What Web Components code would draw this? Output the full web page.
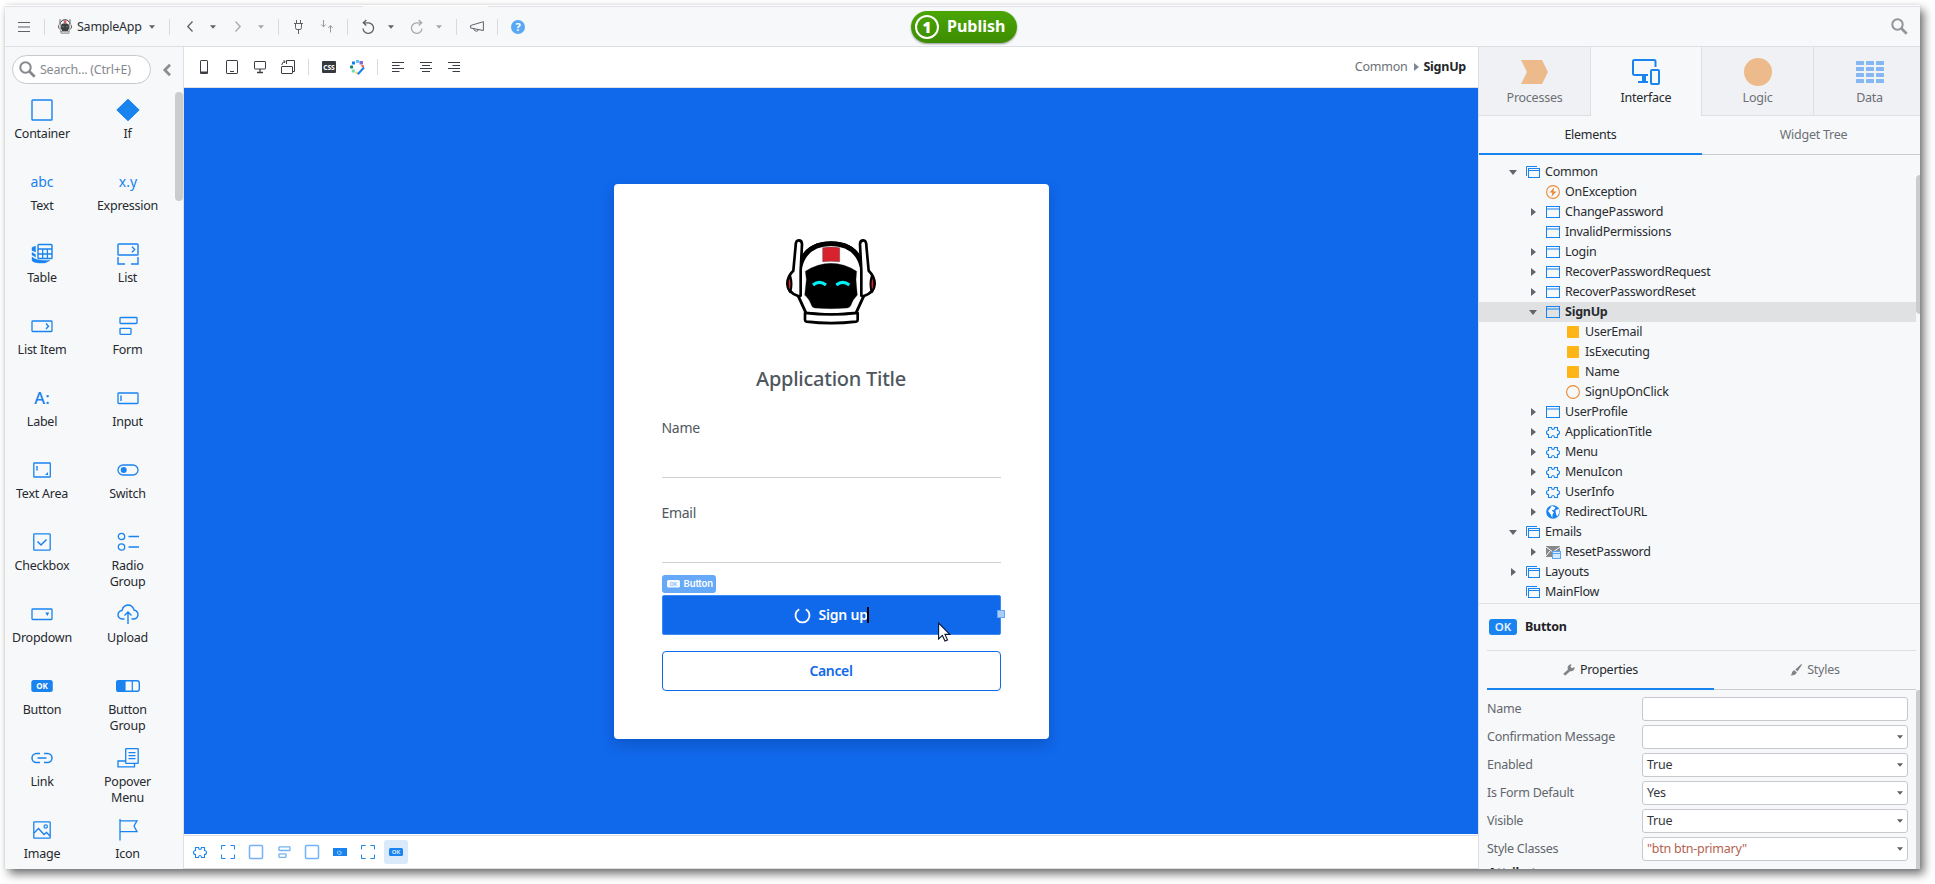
<!DOCTYPE html>
<html lang="en">
<head>
<meta charset="utf-8">
<title>SampleApp</title>
<style>
html,body{margin:0;height:100%;background:#fff;overflow:hidden}
body{font:12.5px/16px "Noto Sans",sans-serif;letter-spacing:-.25px;color:#272b30}
</style>
</head>
<body>
<studio-window></studio-window>
<script>
const W=(w,h,c)=>({w,h,c});
const ROBOT=`<g stroke-linejoin="round" stroke-linecap="round" stroke="#000">
<path d="M38 95Q48 12 135 12Q222 12 232 95L236 165 210 222Q135 232 60 222L34 165Z" fill="#fff" stroke-width="9"/>
<path d="M42 82Q60 14 135 14Q210 14 228 82" fill="none" stroke-width="14"/>
<path d="M57 222V243Q57 247 62 248Q135 257 210 248Q215 247 215 243V222Q135 231 57 222Z" fill="#fff" stroke-width="8"/>
<path d="M29 20Q29 4 38 4Q48 4 48 16L44 95 44 170 38 172Q4 160 4 134Q4 112 22 95Z" fill="#fff" stroke-width="8"/>
<path d="M241 20Q241 4 232 4Q222 4 222 16L226 95 226 170 232 172Q266 160 266 134Q266 112 248 95Z" fill="#fff" stroke-width="8"/>
<path d="M5 134Q5 118 13 112Q20 134 13 160Q5 150 5 134ZM265 134Q265 118 257 112Q250 134 257 160Q265 150 265 134Z" fill="#d8232f" stroke-width="6"/></g>
<path d="M58 97Q95 73 135 73T212 97L210 122 214 168Q200 182 194 200 191 206 184 207Q135 211 86 207 79 206 77 200 70 180 56 168L61 122Z" fill="#000"/>
<path d="M110 26Q135 22 161 26V68Q135 66 110 68Z" fill="#d8232f"/>
<path d="M81 138Q100 122 120 138M151 138Q170 122 190 138" fill="none" stroke="#00f0f8" stroke-width="9" stroke-linecap="butt"/>`;
const T=(x,y,s,t,w=400,f='currentColor')=>`<text x="${x}" y="${y}" font-size="${s}" font-weight="${w}" text-anchor="middle" fill="${f}" stroke="none" letter-spacing="0">${t}</text>`;
const ICONS={
robot:W(90,86,`<svg viewBox="0 0 270 258" width="90" height="86">${ROBOT}</svg>`),
robotSmall:W(14,15,`<svg viewBox="0 0 270 258" width="14" height="15" preserveAspectRatio="none" opacity=".75">${ROBOT}</svg>`),
burger:W(12,10,`<path d="M0 .5H12M0 5H12M0 9.500H12"/>`),
caret:W(6,4,`<path d="M0 .2H6L3 3.800Z" fill="currentColor" stroke="none"/>`),
back:W(6,11,`<path d="M5.500 .5.8 5.500 5.500 10.500" stroke-width="1.300"/>`),
fwd:W(6,11,`<path d="M.5 .5 5.200 5.500.5 10.500" stroke-width="1.300"/>`),
plug:W(9,14,`<path d="M2.500 0V3.500M6.500 0V3.500M0 3.500H9M1.500 3.500V7.500Q1.500 9.500 3 9.500H6Q7.500 9.500 7.500 7.500V3.500M4.500 9.500V14"/>`),
swap:W(12,13,`<path d="M2.500 0V7M.3 4.500 2.500 6.800 4.700 4.500M9.500 12.500V5.500M7.300 8 9.500 5.700 11.700 8"/>`),
undo:W(13,14,`<path d="M1.500 2.800H6.500A5.300 5.300 0 1 1 1 8.500M4.300 0 1.300 2.800 4.300 5.600" stroke-width="1.300"/>`),
redo:W(13,14,`<path d="M11.500 2.800H6.500A5.300 5.300 0 1 0 12 8.500M8.700 0 11.700 2.800 8.700 5.600" stroke-width="1.300"/>`),
mega:W(14,11,`<path d="M.6 4.500 13.400 .7V9.500L.6 7ZM3.500 7.800Q4.500 10.300 6.500 10.200T8 8.600"/>`),
help:W(14,14,`<circle cx="7" cy="7" r="7" fill="#5aa7f3" stroke="none"/>${T(7,11,11,'?',700,'#fff')}`),
mag:W(17,17,`<circle cx="6.500" cy="6.500" r="5.200" stroke-width="2"/><path d="M10.500 10.500 15.700 15.700" stroke-width="2.700"/>`),
collapse:W(8,12,`<path d="M7 .8 1.800 6 7 11.200" stroke-width="2.700"/>`),
phone:W(8,14,`<rect x=".5" y=".5" width="7" height="13" rx=".6"/><path d="M0 12.500H8" stroke-width="2"/>`),
tablet:W(12,14,`<rect x=".5" y=".5" width="11" height="13" rx=".6"/><path d="M4 11.500H8"/>`),
monitor:W(12,12,`<rect x=".5" y=".5" width="11" height="7.500" rx=".4"/><path d="M6 8V11M3 11.500H9" stroke-width="1.300"/>`),
rotate:W(14,14,`<rect x=".5" y="6.500" width="11" height="7" rx=".5"/><path d="M5.500 4V.5H13.500V11.500H12M.8 5Q1 2 4 1.500M2.500 .3 4.200 1.500 3 3"/>`),
css:W(14,12,`<rect width="14" height="12" rx="1" fill="#34383f" stroke="none"/>${T(7,8.500,6.500,'CSS',800,'#fff')}`),
palette:W(15,15,`<g stroke="none"><rect x="6" y="0" width="3" height="3" fill="#5ac8f5"/><rect x="2" y="1.500" width="3" height="3" fill="#1483ee"/><rect x="9.500" y="1" width="3.500" height="3.500" fill="#8a67d8"/><circle cx="1.600" cy="7" r="1.700" fill="#118a77"/><circle cx="3.300" cy="11" r="1.700" fill="#6fe0ad"/><circle cx="6.500" cy="12.800" r="1.200" fill="#f5d64a"/><path d="M10.500 5.500 14 5 13.500 8.500Z" fill="#f0604c"/></g><path d="M14 7.500 7.800 14.200" stroke="#1483ee" stroke-width="2"/>`),
al:W(12,10,`<path d="M0 .5H12M0 3.500H7.500M0 6.500H12M0 9.500H7.500"/>`),
ac:W(12,10,`<path d="M0 .5H12M2 3.500H10M0 6.500H12M2 9.500H10"/>`),
ar:W(12,10,`<path d="M0 .5H12M4.500 3.500H12M0 6.500H12M4.500 9.500H12"/>`),
container:W(22,22,`<rect x="1" y="1" width="20" height="20" rx=".8" stroke-width="1.400"/>`),
if:W(24,22,`<path d="M12 .3 23.200 11 12 21.700.8 11Z" fill="currentColor"/>`),
abc:W(26,22,T(13,16,14,'abc')),
xy:W(26,22,T(13,16,14,'x.y')),
table:W(22,22,`<rect x="7" y="1.500" width="14" height="14" rx=".8" stroke-width="1.400"/><path d="M7 6H21M7 11H21M11.700 6V15.500M16.400 6V15.500" stroke-width="1.300"/><path d="M4.500 3 1 4.500V7.500L4.500 9ZM1 9.500 4.500 11.500V14L1 12ZM1 14Q5 18 19 17.500L14 20H8Q2 19.500 1 17.500Z" fill="currentColor" stroke-width=".4"/>`),
list:W(22,22,`<rect x="1" y="1" width="20" height="11" rx=".8" stroke-width="1.400"/><path d="M15 3.800 17.700 6.500 15 9.200M1 14V21H8M14 21H21V14" stroke-width="1.400"/>`),
listitem:W(22,12,`<rect x="1" y="1" width="20" height="10.500" rx=".8" stroke-width="1.300"/><path d="M15 3.500 17.500 6.200 15 9" stroke-width="1.400"/>`),
form:W(20,20,`<rect x="2" y="1.500" width="17" height="6" rx=".8" stroke-width="1.300"/><rect x="2" y="12.300" width="11" height="6" rx=".8" stroke-width="1.300"/>`),
label:W(20,22,T(10,16.500,16.500,'A:',500)),
input:W(22,12,`<rect x="1" y="1" width="20" height="10.500" rx=".8" stroke-width="1.300"/><path d="M4 3.500V9" stroke-width="1.400"/>`),
textarea:W(18,16,`<rect x=".8" y="1" width="16.500" height="14" rx=".5" stroke-width="1.300"/><path d="M4 4V8.500" stroke-width="1.400"/><path d="M15 10V13H12Z" fill="currentColor" stroke="none"/>`),
switch:W(22,12,`<rect x="1" y="1" width="20" height="10" rx="5" stroke-width="1.300"/><circle cx="6.700" cy="6" r="3" fill="currentColor" stroke="none"/>`),
checkbox:W(18,18,`<rect x=".8" y=".8" width="16.400" height="16.400" rx=".6" stroke-width="1.300"/><path d="M4.500 8.500 8 12 13.500 6.500" stroke-width="1.500"/>`),
radio:W(22,20,`<circle cx="4.500" cy="4.500" r="3.200" stroke-width="1.300"/><circle cx="4.500" cy="15" r="3.200" stroke-width="1.300"/><path d="M11.500 4.500H22M11.500 15H22" stroke-width="1.300"/>`),
dropdown:W(22,12,`<rect x="1" y="1" width="20" height="10.500" rx=".8" stroke-width="1.300"/><path d="M14.300 4.500H18.300L16.300 8Z" fill="currentColor" stroke="none"/>`),
upload:W(22,20,`<path d="M7.500 15H5.500Q1 14.500 1 10.500 1.500 7 5 6.500 6 1.500 11 1 15.500 1 17 6 21 7 21 10.800 20.500 15 16 15H14.500M11 20V8.500M7.500 11.500 11 8 14.500 11.500" stroke-width="1.400"/>`),
ok:W(22,12,`<rect x=".3" y="0" width="21.500" height="12" rx="2.500" fill="currentColor" stroke="none"/>${T(11,9,8,'OK',700,'#fff')}`),
btngroup:W(24,12,`<rect x=".7" y=".7" width="22.600" height="10.600" rx="2.200" stroke-width="1.400"/><path d="M1 1H9V11H1ZM16.300 1V11" fill="currentColor" stroke-width="1.200"/>`),
link:W(22,12,`<path d="M9 1.500H5.500A4.500 4.500 0 0 0 5.500 10.500H9M13 1.500H16.500A4.500 4.500 0 0 1 16.500 10.500H13M6.500 6H15.500" stroke-width="1.500"/>`),
popover:W(22,20,`<rect x="8.700" y=".7" width="12.500" height="14.600" rx=".6" stroke-width="1.300"/><path d="M11.500 4.700H18.500M11.500 7.700H18.500M11.500 10.700H18.500M8.500 13H1V18.800H17.500V15.500" stroke-width="1.300"/>`),
image:W(18,18,`<rect x=".8" y=".8" width="16.400" height="16.400" rx=".6" stroke-width="1.300"/><circle cx="12.700" cy="5.500" r="1.700" stroke-width="1.200"/><path d="M1 12 5.500 7.500 11 13.500 13.500 11.500 17 15" stroke-width="1.400"/>`),
flag:W(20,22,`<path d="M2 0V21.500M2 1.800H19L16 7 19 12.700H2" stroke-width="1.300"/>`),
puzzle:W(14,11,`<path d="M2.500 3.500V.5H5.500Q5.500 2.500 7 2.500T8.500 .5H11.500V3.500Q13.500 3.500 13.500 5.500T11.500 7.500V10.500H8.500Q8.500 8.500 7 8.500T5.500 10.500H2.500V7.500Q.5 7.500 .5 5.500T2.500 3.500Z" stroke-width="1.100"/>`),
dashed:W(14,14,`<path d="M4.500 .5H.5V4.500M9.500 .5H13.500V4.500M13.500 9.500V13.500H9.500M4.500 13.500H.5V9.500"/>`),
box:W(14,14,`<rect x=".5" y=".5" width="13" height="13" rx="1" stroke="#72b2f5" stroke-width="1.500"/>`),
formS:W(13,12,`<rect x="1" y=".8" width="11" height="3.700" rx=".5" stroke="#72b2f5" stroke-width="1.300"/><rect x="1" y="7.800" width="7" height="3.500" rx=".5" stroke="#72b2f5" stroke-width="1.300"/>`),
busy:W(14,8,`<rect width="14" height="8" fill="currentColor" stroke="none"/><path d="M5.500 2.800A2 2 0 1 0 8.500 4.500M6.800 2.500V4H8.500" stroke="#bfe0ff" stroke-width=".8"/>`),
okS:W(14,8,`<rect width="14" height="8" rx="1.500" fill="currentColor" stroke="none"/>${T(7,6.300,6,'OK',700,'#cbe4fd')}`),
okW:W(13,8,`<rect width="13" height="7.500" rx="1.500" fill="#f3f9ff" stroke="none"/>${T(6.500,5.800,5,'OK',700,'#8abdf8')}`),
okL:W(28,16,`<rect width="28" height="16" rx="3" fill="currentColor" stroke="none"/>${T(14,12.200,11.500,'OK',600,'#e4f1ff')}`),
tri:W(5,8,`<path d="M0 0 5 4 0 8Z" fill="currentColor" stroke="none"/>`),
triD:W(8,5,`<path d="M0 0H8L4 5Z" fill="currentColor" stroke="none"/>`),
flow:W(14,12,`<rect x="2.500" y="2.500" width="11" height="9"/><path d="M2 4.500H14M.5 10V.5H11"/>`),
screen:W(14,12,`<rect x=".5" y=".5" width="13" height="11"/><path d="M0 3H14"/>`),
bolt:W(14,14,`<circle cx="7" cy="7" r="6.400" stroke="#ea8a35" stroke-width="1.100"/><path d="M8.300 2.300 3.500 7.600H6.400L5.500 11.700 10.500 6.400H7.500Z" fill="#ea8a35" stroke="none"/>`),
sq:W(14,12,`<rect x="1" width="12" height="12" rx=".5" fill="#ffb516" stroke="none"/>`),
circle:W(14,14,`<circle cx="7" cy="7" r="6.400" stroke="#ea8a35" stroke-width="1.100"/>`),
globe:W(14,14,`<circle cx="7" cy="7" r="6.800" fill="currentColor" stroke="none"/><path d="M5.800 .8 9.500 2.500 8 5 5.500 5.300 7.800 7.500 6.500 9.500 6.300 13 4.500 9 2 6 4 3.500ZM9.500 5 13 4 13.300 8 11 11.500 9.800 8Z" fill="#fff" stroke="none"/>`),
mail:W(15,13,`<path d="M0 0H14V11H0Z" fill="#86888b" stroke="none"/><path d="M0 1 7 6 14 1M0 10 4 5" stroke="#f7f8fa" stroke-width="1"/><rect x="6.500" y="5.500" width="8" height="7" fill="#d7eafd" stroke="#58a6f4"/><path d="M6.500 7.500H14.500" stroke="#58a6f4"/>`),
proc:W(27,24,`<path d="M0 0H21L27 12 21 24H0L6 12Z" fill="#edba8b" stroke="none"/>`),
iface:W(28,26,`<path d="M16 16H3Q1 16 1 14.500V2.500Q1 1 2.500 1H22Q23.500 1 23.500 2.500V8M6 23H16" stroke-width="2"/><path d="M10 16H14V22H10Z" fill="currentColor" stroke="none"/><rect x="19" y="11" width="8" height="14" rx="1" stroke-width="2"/>`),
logic:W(28,28,`<circle cx="14" cy="14" r="14" fill="#edba8b" stroke="none"/>`),
data:W(28,22,[0,6,12,18].map(y=>[0,10,20].map(x=>`<rect x="${x}" y="${y}" width="8" height="4" rx=".6" fill="#85b8f3" stroke="none"/>`).join('')).join('')),
wrench:W(12,12,`<path d="M1.200 10.800 7 5.500" stroke-width="2.600"/><path d="M11.500 3A3.500 3.500 0 1 1 8.500 .3L7.500 2.800 9 4.300Z" fill="currentColor" stroke="none"/>`),
brush:W(12,12,`<path d="M11.300 0 12 .8 7.500 7.500 5.300 5.500ZM4.500 6.300 6.800 8.500Q6 11.500 .3 11.500 2 10.500 2 8.500 2.500 6.500 4.500 6.300Z" fill="currentColor" stroke="none"/>`),
spin:W(17,17,`<path d="M5.200 2.200A7 7 0 1 0 11.800 2.200" stroke-width="1.800"/>`),
cursor:W(13,20,`<path d="M.6 1V17L4.400 13.400 7 19 9.500 18 7 12.400H11.800Z" fill="#fff" stroke="#0b1430" stroke-width="1.100"/>`),
};
const ic=(n,st='')=>`<studio-icon name="${n}" style="${st}"></studio-icon>`;
class Base extends HTMLElement{
  connectedCallback(){
    if(this.shadowRoot)return;
    this.attachShadow({mode:'open'}).innerHTML=`<style>*{box-sizing:border-box}${this.css()}</style>${this.html()}`;
  }
  a(n){return this.getAttribute(n)||''}
}
const def=(n,css,html)=>customElements.define(n,class extends Base{css(){return typeof css==='function'?css(this):css}html(){return html(this)}});

def('studio-icon',`:host{display:block;flex:none}svg{display:block;overflow:visible}`,e=>{
  const i=ICONS[e.a('name')];return `<svg width="${i.w}" height="${i.h}" fill="none" stroke="currentColor">${i.c}</svg>`});

/* Items placed along a bar: [icon, start, colour]; each margin is the gap from the previous item. */
const strip=(items,from)=>{let p=from;return items.map(([n,x,c])=>{
  const w=n==='|'?1:ICONS[n].w,m=x-p;p=x+w;
  return n==='|'?`<i style="margin-left:${m}px"></i>`:ic(n,`margin-left:${m}px;color:${c||'inherit'}`)}).join('')};

def('top-bar',`:host{display:flex;height:41px;background:#f7f8fa;border-top:1px solid #dcdfe3;border-bottom:1px solid #dcdfe3;align-items:center;color:#5e6166;position:relative;box-sizing:border-box;padding-right:12px}
i{width:1px;height:16px;background:#d7dade}.app{color:#2b2f34;margin-left:5px;width:72px;white-space:nowrap}
.notch{position:absolute;top:-1px;left:358px;width:125px;height:1px;background:#f7f8fa}
.pub{position:absolute;left:906px;top:4px;width:106px;height:32px;border-radius:16px;background:linear-gradient(#4aa604,#3d8c03);box-shadow:0 1px 2px rgba(0,0,0,.4);color:#fff;display:flex;align-items:center;font:700 16px/20px "Noto Sans",sans-serif;letter-spacing:0}
.pub b{width:24px;height:24px;box-sizing:border-box;border:2px solid #fff;border-radius:50%;margin:0 8px 0 4px;display:flex;justify-content:center;align-items:center;font-size:15px}.pub span{padding-bottom:2px}`,
()=>`<div class="notch"></div>${strip([['burger',18],['|',44],['robotSmall',58]],5)}<span class="app">SampleApp</span>${strip([['caret',149],['|',169],['back',187],['caret',210],['fwd',235,'#a6a9ae'],['caret',258,'#a6a9ae'],['|',278],['plug',294],['swap',321,'#96999e'],['|',347],['undo',362],['caret',388],['redo',410,'#a6a9ae'],['caret',436,'#a6a9ae'],['|',456],['mega',470],['|',497],['help',511]],149)}${ic('mag','margin-left:auto;color:#939598')}<div class="pub"><b>1</b><span>Publish</span></div>`);

def('widget-item',`:host{display:block;height:72px;text-align:center;color:#26292e}
.i{height:32px;display:flex;align-items:center;justify-content:center;color:#1983f0}.l{width:66px;margin:auto;white-space:nowrap;display:flex;justify-content:center}`,
e=>`<div class="i">${ic(e.a('icon'))}</div><div class="l"><span><slot></slot></span></div>`);

const WIDGETS=[['container','Container'],['if','If'],['abc','Text'],['xy','Expression'],['table','Table'],['list','List'],['listitem','List Item'],['form','Form'],['label','Label'],['input','Input'],['textarea','Text Area'],['switch','Switch'],['checkbox','Checkbox'],['radio','Radio<br>Group'],['dropdown','Dropdown'],['upload','Upload'],['ok','Button'],['btngroup','Button<br>Group'],['link','Link'],['popover','Popover<br>Menu'],['image','Image'],['flag','Icon']];
def('widget-toolbox',`:host{display:flex;flex-direction:column;width:179px;background:#f7f8fa;border-right:1px solid #dcdfe3;box-sizing:border-box;overflow:hidden}
.s{display:flex;align-items:center;height:45px;flex:none;padding:0 12px 0 7px}
.f{width:139px;height:29px;border:1px solid #c6c9cd;border-radius:15px;background:#fff;display:flex;align-items:center;color:#85898e;padding-left:6px;gap:4px;white-space:nowrap}
.b{display:flex;flex:1;min-height:0}.g{display:grid;grid-template-columns:74px 97px;align-content:start;margin-top:2px}
.bar{width:8px;height:109px;border-radius:4px;background:#cbccce;margin-left:-1px}`,
()=>`<div class="s"><div class="f">${ic('mag')}<span>Search... (Ctrl+E)</span></div>${ic('collapse','margin-left:12px;color:#8b8d90')}</div>
<div class="b"><div class="g">${WIDGETS.map(([i,t])=>`<widget-item icon="${i}">${t}</widget-item>`).join('')}</div><div class="bar"></div></div>`);

def('canvas-bar',`:host{display:flex;height:41px;background:#fff;border-bottom:1px solid #dcdfe3;align-items:center;color:#3a3e44;padding-right:12px;box-sizing:border-box}
i{width:1px;height:16px;background:#d7dade}.c{margin-left:auto;display:flex;align-items:center;color:#6c7178}b{color:#23262a}`,
()=>`${strip([['phone',200],['tablet',226],['monitor',254],['rotate',281],['|',308],['css',322],['palette',350],['|',377],['al',392],['ac',420],['ar',448]],184)}<div class="c">Common${ic('tri','margin:0 4px 0 7px;color:#7d8794')}<b>SignUp</b></div>`);

def('form-field',`:host{display:block;color:#4f575e}span{display:block;font-size:14px;line-height:20px;letter-spacing:-.3px}div{height:40px;border-bottom:1px solid #cfd2d5}`,()=>`<span><slot></slot></span><div></div>`);

def('signup-card',`:host{display:flex;flex-direction:column;width:435px;height:555px;background:#fff;border-radius:4px;box-shadow:0 6px 14px rgba(0,0,30,.17);padding:55px 48px 0;box-sizing:border-box}
h1{margin:40px 0 4px;font:500 20px/28px "Noto Sans",sans-serif;letter-spacing:-.25px;color:#4f575e;text-align:center}
.badge{display:flex;align-items:center;gap:4px;width:54px;height:18px;background:#66a9f8;border-radius:3px;color:#fff;padding-left:5px;font:600 9.500px/18px Inter,"Noto Sans",sans-serif;letter-spacing:-.1px;margin-top:12px}
.btn{display:flex;align-items:center;justify-content:center;height:40px;border:1px solid #1068eb;border-radius:4px;font-weight:600;font-size:14px;position:relative;width:339px;box-sizing:border-box;color:#1068eb;letter-spacing:-.35px}
.p{background:#1068eb;color:#fff;margin-top:2px;border-color:#3c8bf3;border-radius:2px}.p b{font-weight:600;margin-left:8px;width:47px;white-space:nowrap;letter-spacing:-.2px}
.k{width:2px;height:16px;background:#000;margin-left:1px}.h{position:absolute;left:334px;top:14px;width:8px;height:8px;background:#a9cdf9;border:1px solid #66a9f8}
.cur{position:absolute;left:275px;top:26px}`,
()=>`${ic('robot','margin:0 auto')}<h1>Application Title</h1><form-field style="margin-top:21px">Name</form-field><form-field style="margin-top:25px">Email</form-field>
<div class="badge">${ic('okW')}<span>Button</span></div><div class="btn p">${ic('spin')}<b>Sign up</b><span class="k"></span><span class="h"></span><span class="cur">${ic('cursor')}</span></div><div class="btn" style="margin-top:16px">Cancel</div>`);

def('crumb-bar',`:host{display:flex;height:34px;margin-top:1px;border-top:1px solid #dcdfe3;border-bottom:1px solid #dcdfe3;box-sizing:border-box;align-items:center;color:#1983f0;padding-left:4px}
div{width:24px;height:24px;margin-right:4px;display:flex;align-items:center;justify-content:center;border-radius:3px}.on{background:#dbeafb}`,
()=>['puzzle','dashed','box','formS','box','busy','dashed','okS'].map((n,i)=>`<div class="${i==7?'on':''}">${ic(n)}</div>`).join(''));

def('module-tabs',`:host{display:grid;grid-template-columns:111px 111px 112px 112px;height:69px;flex:none}
div{display:flex;flex-direction:column;align-items:center;background:#f0f1f4;border-bottom:1px solid #dcdfe3;border-left:1px solid #dcdfe3;color:#6c7076}
div:first-of-type{border-left:0}.i{height:49px;flex:none;display:grid;place-items:center}.on{background:#f7f8fa;border-bottom:0;color:#26292e}.on .i{color:#1983f0}.l{margin-top:-6px}`,
()=>[['proc','Processes'],['iface','Interface'],['logic','Logic'],['data','Data']].map(([i,t],k)=>`<div class="${k==1?'on':''}"><span class="i">${ic(i)}</span><span class="l">${t}</span></div>`).join(''));

def('pair-tabs',`:host{display:grid;flex:none;height:39px;text-align:center;color:#6c7076;box-sizing:border-box}
div{display:flex;gap:5px;align-items:center;justify-content:center;border-bottom:1px solid #c9ccd0;padding-bottom:1px}div:first-of-type{border-bottom:2px solid #1983f0;color:#26292e;padding-bottom:0}`,
e=>`<div><slot name="a"></slot></div><div><slot name="b"></slot></div>`);

def('tree-row',e=>`:host{display:flex;align-items:center;height:20px;padding-left:${27+20*+e.a('level')}px;${e.hasAttribute('on')?'background:#e0e1e3;font-weight:700;':''}}
.c{width:14px;margin-right:6px;display:grid;place-items:center;color:#62666b}.i{width:14px;margin-right:5px;color:#1983f0}`,
e=>`<span class="c">${e.a('s')?ic(e.a('s')=='o'?'triD':'tri'):''}</span><span class="i">${ic(e.a('icon'))}</span><span><slot></slot></span>`);

const TREE=[[0,'o','flow','Common'],[1,'','bolt','OnException'],[1,'c','screen','ChangePassword'],[1,'','screen','InvalidPermissions'],[1,'c','screen','Login'],[1,'c','screen','RecoverPasswordRequest'],[1,'c','screen','RecoverPasswordReset'],[1,'o','screen','SignUp',1],[2,'','sq','UserEmail'],[2,'','sq','IsExecuting'],[2,'','sq','Name'],[2,'','circle','SignUpOnClick'],[1,'c','screen','UserProfile'],[1,'c','puzzle','ApplicationTitle'],[1,'c','puzzle','Menu'],[1,'c','puzzle','MenuIcon'],[1,'c','puzzle','UserInfo'],[1,'c','globe','RedirectToURL'],[0,'o','flow','Emails'],[1,'c','mail','ResetPassword'],[0,'c','flow','Layouts'],[0,'','flow','MainFlow']];
def('element-tree',`:host{display:flex;height:449px;flex:none;border-bottom:1px solid #dcdfe3;box-sizing:border-box;width:441px}
.t{width:437px;padding-top:7px}.b{width:4px;height:139px;margin-top:20px;background:#cbccce;border-radius:4px 0 0 4px}`,
()=>`<div class="t">${TREE.map(([l,s,i,t,on])=>`<tree-row level="${l}" s="${s}" icon="${i}" ${on?'on':''}>${t}</tree-row>`).join('')}</div><div class="b"></div>`);

def('property-row',`:host{display:flex;align-items:center;height:24px;margin-bottom:4px;color:#62666c}
label{width:155px}.f{width:266px;height:24px;border:1px solid #c6c9cd;border-radius:3px;background:#fff;display:flex;align-items:center;justify-content:space-between;padding:0 4px;color:#33373c}.str{color:#b5624f}studio-icon{color:#5b5f64}`,
e=>`<label>${e.a('label')}</label><div class="f"><span class="${e.hasAttribute('str')?'str':''}"><slot></slot></span>${e.hasAttribute('plain')?'':ic('caret')}</div>`);

def('property-panel',`:host{display:block;width:441px;flex:1;min-height:0;overflow:hidden}
.h{display:flex;align-items:center;height:47px;margin:0 4px 0 8px;padding-left:2px;gap:8px;border-bottom:1px solid #dcdfe3;color:#1983f0}b{color:#1f2226}
pair-tabs{grid-template-columns:227px 202px;margin:0 4px 0 8px;height:39px}.q{display:flex}.p{padding:7px 0 0 8px;width:437px}.b{width:4px;background:#cbccce;height:190px;border-radius:2px 0 0 0}
.t{margin:0 0 0 1px;font-weight:700;color:#26292e;height:16px;line-height:16px}`,
()=>`<div class="h">${ic('okL')}<b>Button</b></div><pair-tabs><studio-icon slot="a" name="wrench" style="color:#808388"></studio-icon><span slot="a">Properties</span><studio-icon slot="b" name="brush" style="color:#808388"></studio-icon><span slot="b">Styles</span></pair-tabs>
<div class="q"><div class="p"><property-row label="Name" plain></property-row><property-row label="Confirmation Message"></property-row><property-row label="Enabled">True</property-row><property-row label="Is Form Default">Yes</property-row><property-row label="Visible">True</property-row><property-row label="Style Classes" str>"btn btn-primary"</property-row><div class="t">Attributes</div></div><div class="b"></div></div>`);

def('side-panel',`:host{display:flex;flex-direction:column;width:442px;border-left:1px solid #dcdfe3;box-sizing:border-box;background:#f7f8fa;overflow:hidden}
module-tabs{width:446px}.e{width:446px;grid-template-columns:223px 223px}`,
()=>`<module-tabs></module-tabs><pair-tabs class="e"><span slot="a">Elements</span><span slot="b">Widget Tree</span></pair-tabs><element-tree></element-tree><property-panel></property-panel>`);

def('design-canvas',`:host{display:flex;flex-direction:column;flex:1;background:#fff;min-width:0}
.c{flex:1;background:#1068eb;display:flex;justify-content:center;align-items:flex-start;padding:96px 0 0 0}`,
()=>`<canvas-bar></canvas-bar><div class="c"><signup-card></signup-card></div><crumb-bar></crumb-bar>`);

def('studio-window',`:host{display:block;padding:5px 0 0 5px}
.w{width:1915px;height:864px;display:flex;flex-direction:column;padding-top:1px;background:#fff;box-shadow:4px 5px 9px rgba(0,0,0,.55),0 0 3px rgba(0,0,0,.1)}
.m{display:flex;flex:1;min-height:0}`,
()=>`<div class="w"><top-bar></top-bar><div class="m"><widget-toolbox></widget-toolbox><design-canvas></design-canvas><side-panel></side-panel></div></div>`);
</script>
</body>
</html>
